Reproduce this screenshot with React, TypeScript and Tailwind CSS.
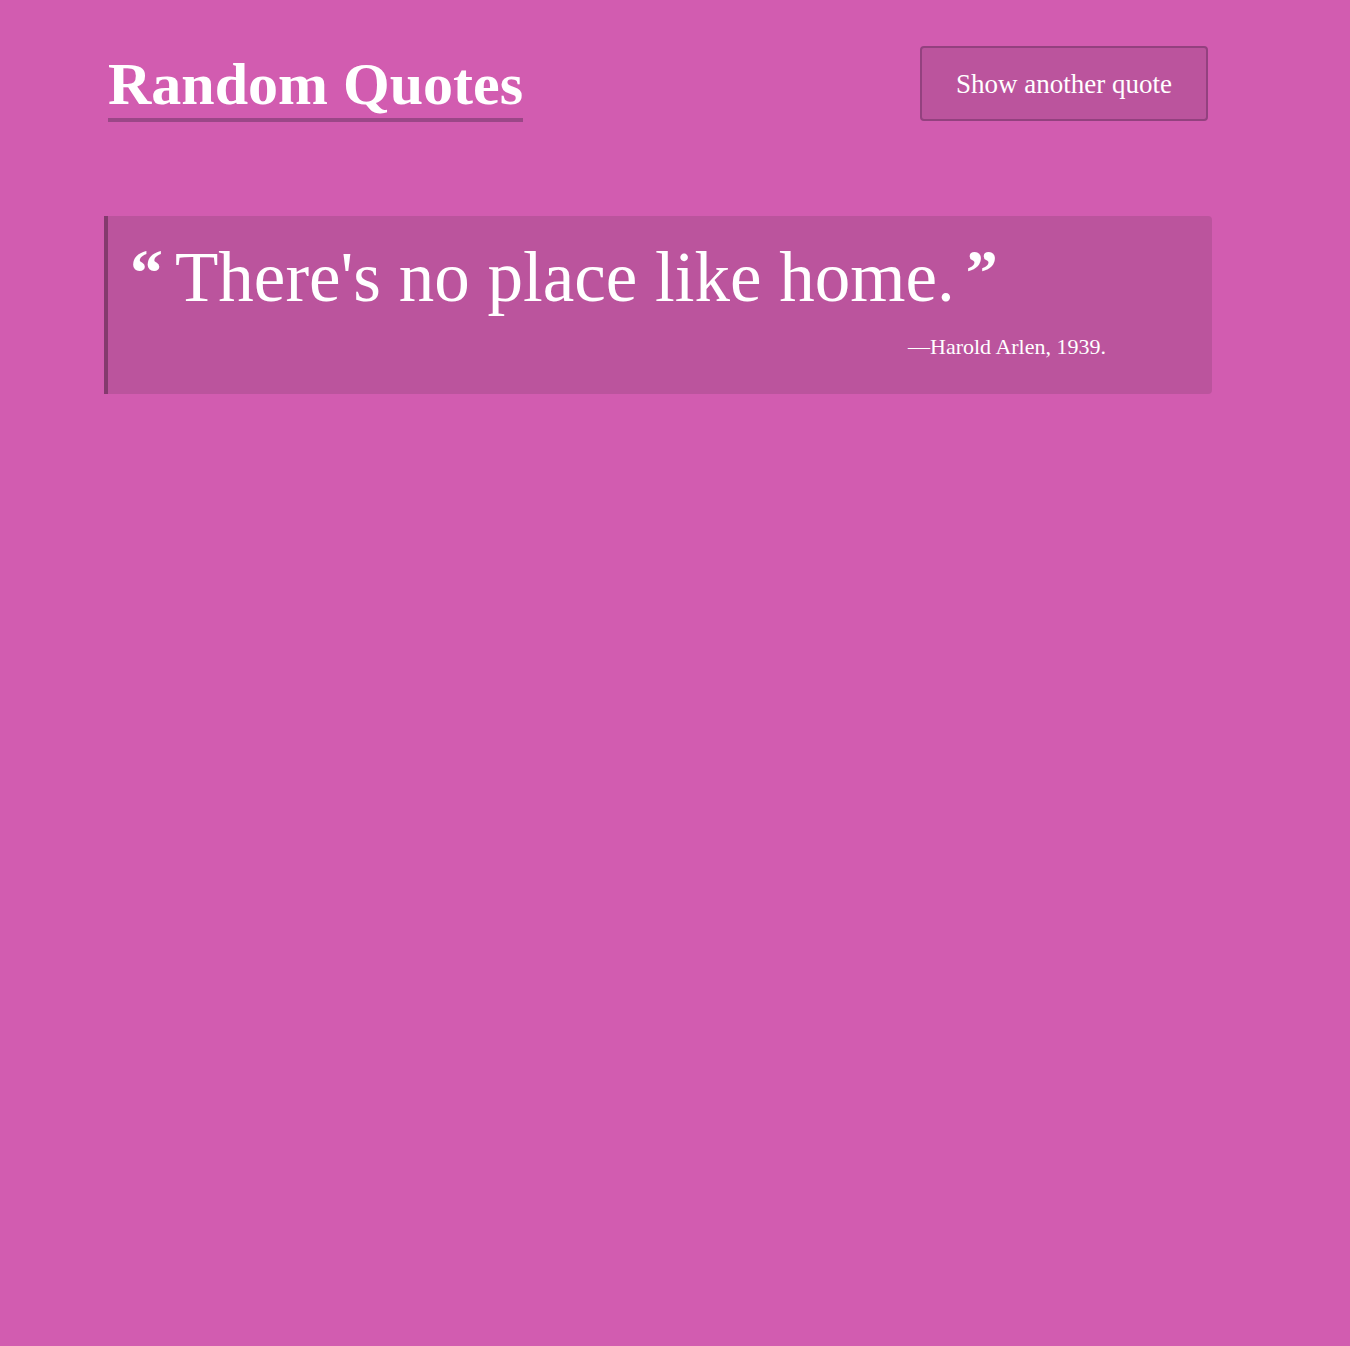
import React from "react";

const serif = { fontFamily: '"Liberation Serif", "DejaVu Serif", serif' };

export default function App() {
  return (
    <div className="min-h-[1346px] w-full bg-[#d25cb0] text-white" style={serif}>
      <div className="ml-[104px] w-[1108px] pt-[46px]">
        {/* Header */}
        <header className="flex items-start justify-between">
          <h1 className="ml-[4px] mt-[6px] border-b-4 border-[#9b4787] pb-[2px] text-[60px] font-bold leading-[64px]">
            Random Quotes
          </h1>
          <button className="mr-[4px] h-[75px] w-[288px] rounded-[4px] border-2 border-[#93417f] bg-[#bb549d] pt-[2px] text-[27px] text-white">
            Show another quote
          </button>
        </header>

        {/* Quote */}
        <blockquote className="mt-[94px] h-[178px] rounded-r-[4px] border-l-4 border-[#843a6e] bg-[#bb549d] pl-[22px] pr-[106px] pt-[21px]">
          <p className="flex items-start">
            <span className="mr-[12px] mt-[6px] text-[66px] font-bold leading-[60px]">“</span>
            <span className="text-[71px] leading-[80px]">There's no place like home.</span>
            <span className="ml-[11px] mt-[6px] text-[64px] font-bold leading-[60px]">”</span>
          </p>
          <p className="mt-[18px] text-right text-[22px] leading-[24px]">—Harold Arlen, 1939.</p>
        </blockquote>
      </div>
    </div>
  );
}
